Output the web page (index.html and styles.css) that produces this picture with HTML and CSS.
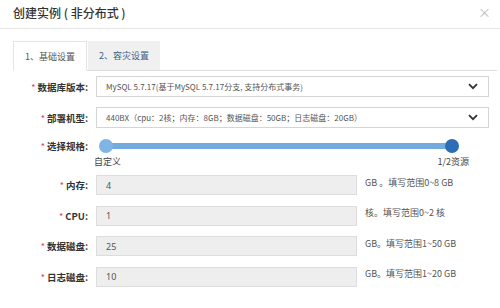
FILE: index.html
```html
<!DOCTYPE html>
<html lang="zh-CN">
<head>
    <meta charset="UTF-8">
    <title>创建实例（非分布式）</title>
    <link rel="stylesheet" href="styles.css">
</head>
<body>
    <div class="modal">
        <div class="modal-header">
            <span class="modal-title">创建实例 ( 非分布式 )</span>
            <span class="modal-close">×</span>
        </div>

        <div class="modal-body">
            <div class="tabs">
                <div class="tab active">1、基础设置</div>
                <div class="tab">2、容灾设置</div>
            </div>

            <div class="form-row row-select first">
                <label class="form-label"><i>*</i>数据库版本:</label>
                <div class="select-box">
                    <span>MySQL 5.7.17(基于MySQL 5.7.17分支, 支持分布式事务)</span>
                    <svg class="chevron" width="10" height="7" viewBox="0 0 10 7"><path d="M1 1.2 L5 5.2 L9 1.2" fill="none" stroke="#333" stroke-width="1.8"/></svg>
                </div>
            </div>

            <div class="form-row row-select">
                <label class="form-label"><i>*</i>部署机型:</label>
                <div class="select-box">
                    <span>440BX（cpu：2核；内存：8GB；数据磁盘：50GB；日志磁盘：20GB）</span>
                    <svg class="chevron" width="10" height="7" viewBox="0 0 10 7"><path d="M1 1.2 L5 5.2 L9 1.2" fill="none" stroke="#333" stroke-width="1.8"/></svg>
                </div>
            </div>

            <div class="form-row row-slider">
                <label class="form-label"><i>*</i>选择规格:</label>
                <div class="slider">
                    <div class="slider-track">
                        <span class="thumb thumb-left"></span>
                        <span class="thumb thumb-right"></span>
                    </div>
                </div>
            </div>
            <div class="slider-labels">
                <span>自定义</span>
                <span>1/2资源</span>
            </div>

            <div class="form-row row-input">
                <label class="form-label"><i>*</i>内存:</label>
                <input class="text-input" type="text" value="4" readonly>
                <span class="help">GB 。填写范围0~8 GB</span>
            </div>
            <div class="form-row row-input">
                <label class="form-label"><i>*</i>CPU:</label>
                <input class="text-input" type="text" value="1" readonly>
                <span class="help">核。填写范围0~2 核</span>
            </div>
            <div class="form-row row-input">
                <label class="form-label"><i>*</i>数据磁盘:</label>
                <input class="text-input" type="text" value="25" readonly>
                <span class="help">GB。填写范围1~50 GB</span>
            </div>
            <div class="form-row row-input">
                <label class="form-label"><i>*</i>日志磁盘:</label>
                <input class="text-input" type="text" value="10" readonly>
                <span class="help">GB。填写范围1~20 GB</span>
            </div>
        </div>
    </div>
</body>
</html>
```

FILE: styles.css
```css
body {
    margin: 0;
    background-color: #fff;
    font-family: "Noto Sans CJK SC", "Noto Sans", sans-serif;
    color: #333;
    font-size: 10px;
}

.modal {
    width: 500px;
    height: 308px;
    overflow: hidden;
}

.modal-header {
    height: 29px;
    padding: 0 12px 3px 13px;
    box-sizing: border-box;
    display: flex;
    align-items: center;
    justify-content: space-between;
    border-bottom: 1px solid #e5e5e5;
}

.modal-title {
    font-size: 12px;
    font-weight: 500;
    color: #333;
}

.modal-close {
    font-size: 13px;
    color: #bbb;
    margin-right: -3px;
    margin-top: -2px;
}

.modal-body {
    padding: 12px 3px 0 13px;
}

/* 标签页 */
.tabs {
    display: flex;
    height: 29px;
    border-bottom: 1px solid #ddd;
}

.tab {
    width: 72px;
    display: flex;
    align-items: center;
    justify-content: center;
    font-size: 9px;
    color: #3d5f85;
    background-color: #f0f0f0;
    margin-right: 1px;
}

.tab.active {
    background-color: #fff;
    color: #555;
    border: 1px solid #e5e5e5;
    border-bottom: 1px solid #fff;
    margin-bottom: -1px;
}

/* 表单 */
.form-row {
    display: flex;
    align-items: center;
}

.form-label {
    width: 75px;
    text-align: right;
    margin-right: 8px;
    font-weight: bold;
    font-size: 9.5px;
    color: #333;
}

.form-label i {
    color: #e4393c;
    font-style: normal;
    font-weight: normal;
    font-size: 9px;
    margin-right: 2px;
}

.row-select {
    margin-top: 10px;
}

.row-select.first {
    margin-top: 5px;
}

.select-box {
    width: 372px;
    height: 19px;
    border: 1px solid #d5d5d5;
    display: flex;
    align-items: center;
    justify-content: space-between;
    padding: 0 10px 0 9px;
    font-size: 8px;
    color: #555;
}

.chevron {
    flex: none;
}

.row-slider {
    margin-top: 11px;
    height: 14px;
}

.slider {
    width: 392px;
    padding-left: 8px;
}

.slider-track {
    position: relative;
    width: 351px;
    height: 6px;
    border-radius: 3px;
    background-color: #74abdf;
}

.thumb {
    position: absolute;
    top: -4px;
    width: 14px;
    height: 14px;
    border-radius: 50%;
}

.thumb-left {
    left: -5px;
    background-color: #7fb4e6;
}

.thumb-right {
    right: -4px;
    background-color: #2d6db5;
}

.slider-labels {
    display: flex;
    justify-content: space-between;
    width: 375px;
    margin-left: 81px;
    margin-top: 2px;
    font-size: 9px;
    color: #444;
    line-height: 14px;
}

.row-input {
    margin-top: 6px;
}

.row-input + .row-input {
    margin-top: 10.5px;
}

.text-input {
    width: 261px;
    height: 20px;
    box-sizing: border-box;
    border: 1px solid #ddd;
    background-color: #eee;
    padding: 0 0 0 9px;
    font-family: "Noto Sans", sans-serif;
    font-size: 9px;
    color: #555;
    margin: 0;
}

.help {
    margin-left: 8px;
    font-size: 9px;
    color: #555;
    margin-top: -6px;
}
```
